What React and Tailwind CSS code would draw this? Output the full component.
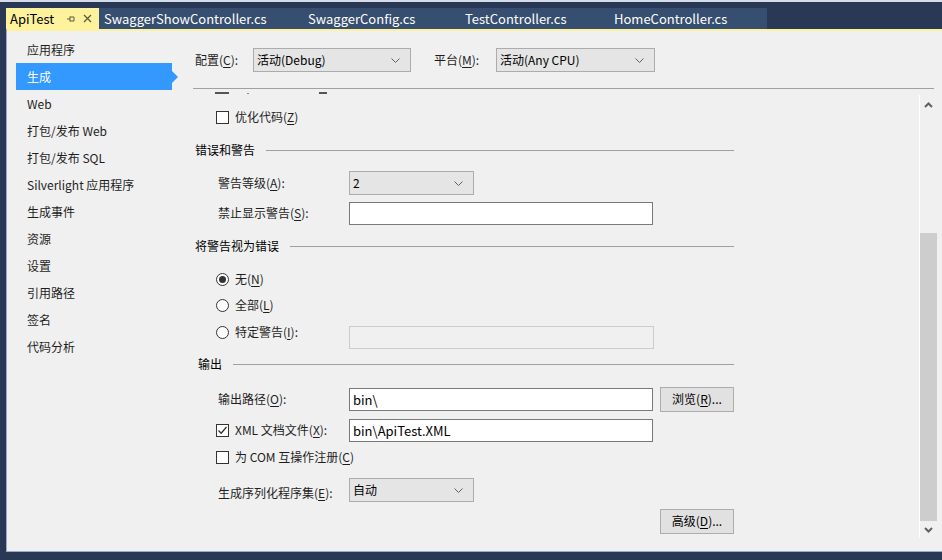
import React from 'react';

const font = { fontFamily: '"Noto Sans CJK SC", "Noto Sans", sans-serif' };

function Chevron() {
  return (
    <svg width="9" height="5" viewBox="0 0 9 5" className="shrink-0">
      <path d="M0.5 0.5 L4.5 4.5 L8.5 0.5" fill="none" stroke="#606060" strokeWidth="1" />
    </svg>
  );
}

function Select({ value, w }) {
  return (
    <div className={`h-[24px] ${w} flex items-center justify-between pl-[3px] pr-[10px] bg-[#e5e5e5] border border-[#acacac] text-black`}>
      <span>{value}</span>
      <Chevron />
    </div>
  );
}

function Box({ checked }) {
  return (
    <div className="w-[13px] h-[13px] border border-[#333] bg-white flex items-center justify-center shrink-0">
      {checked && (
        <svg width="11" height="11" viewBox="0 0 11 11">
          <path d="M1.5 5.5 L4.2 8.2 L9.5 2" fill="none" stroke="#333" strokeWidth="1.3" />
        </svg>
      )}
    </div>
  );
}

function Radio({ on }) {
  return (
    <div className="w-[13px] h-[13px] rounded-full border border-[#333] bg-white flex items-center justify-center shrink-0">
      {on && <div className="w-[7px] h-[7px] rounded-full bg-[#333]" />}
    </div>
  );
}

function Key({ k }) {
  return <span className="underline underline-offset-2">{k}</span>;
}

function Section({ title, h, pl = 'pl-[15px]' }) {
  return (
    <div className={`${h} flex items-center ${pl}`}>
      <span className="text-black">{title}</span>
      <div className="flex-1 h-px bg-[#a0a0a0] ml-[11px] mr-[185px]" />
    </div>
  );
}

const nav = ['应用程序', '生成', 'Web', '打包/发布 Web', '打包/发布 SQL', 'Silverlight 应用程序', '生成事件', '资源', '设置', '引用路径', '签名', '代码分析'];

export default function App() {
  return (
    <div className="w-[942px] h-[560px] bg-[#293955] flex flex-col overflow-hidden text-[12px] leading-none" style={font}>
      <div className="h-[2px] bg-[#d6dbe9]" />
      {/* tab strip */}
      <div className="h-[27px] flex items-end pl-[6px] relative">
        <div className="h-[21px] w-[93px] bg-[#fff29d] flex items-center pl-[4px] text-black">
          <span className="text-[13px]">ApiTest</span>
          <svg width="10" height="10" viewBox="0 0 10 10" className="ml-[12px]">
            <path d="M1 5 H4 M4 2.5 V7.5 M4 3 H8 V7 H4" fill="none" stroke="#5e5a41" strokeWidth="1" />
          </svg>
          <svg width="9" height="9" viewBox="0 0 9 9" className="ml-[7px]">
            <path d="M1 1 L8 8 M8 1 L1 8" fill="none" stroke="#5e5a41" strokeWidth="1.3" />
          </svg>
        </div>
        <div className="h-[21px] flex bg-[#364e6f] text-white text-[13px]">
          <div className="w-[203px] flex items-center pl-[5px]">SwaggerShowController.cs</div>
          <div className="w-[157px] flex items-center pl-[6px]">SwaggerConfig.cs</div>
          <div className="w-[149px] flex items-center pl-[6px]">TestController.cs</div>
          <div className="w-[159px] flex items-center pl-[6px]">HomeController.cs</div>
        </div>
      </div>
      {/* body */}
      <div className="flex-1 flex pl-[6px] pb-[8px]">
        <div className="flex-1 flex flex-col border-l border-b border-[#9aa8c8]">
          <div className="h-[2px] bg-[#fff29d]" />
          <div className="flex-1 bg-[#f0f0f0] flex text-[#1e1e1e]">
            {/* left nav */}
            <div className="w-[173px] pt-[5px] pl-[9px] flex flex-col">
              {nav.map((n) =>
                n === '生成' ? (
                  <div key={n} className="h-[27px] w-[156px] bg-[#3399ff] text-white flex items-center pl-[11px] relative">
                    {n}
                    <div className="absolute right-[-6px] top-[8px] w-0 h-0 border-y-[6px] border-y-transparent border-l-[6px] border-l-[#3399ff]" />
                  </div>
                ) : (
                  <div key={n} className="h-[27px] flex items-center pl-[11px]">{n}</div>
                )
              )}
            </div>
            {/* main */}
            <div className="flex-1 flex flex-col">
              <div className="pt-[17px] pl-[15px] flex items-center h-[41px]">
                <span className="w-[58px]">配置(<Key k="C" />):</span>
                <Select value="活动(Debug)" w="w-[158px]" />
                <span className="ml-[23px] w-[62px]">平台(<Key k="M" />):</span>
                <Select value="活动(Any CPU)" w="w-[159px]" />
              </div>
              <div className="h-[16px]" />
              <div className="h-px bg-[#a0a0a0] ml-[13px] mr-[8px]" />
              <div className="flex-1 flex overflow-hidden">
                <div className="flex-1 overflow-hidden">
                  <div className="mt-[-15px] flex flex-col">
                    {/* row scrolled out of view: only its lower edge shows */}
                    <div className="h-[28px] flex items-end pb-[8px] pl-[35px]">
                      <div className="w-[14px] h-[2px] bg-[#555]" />
                      <div className="ml-[18px] w-[2px] h-[1px] bg-[#888]" />
                      <div className="ml-[70px] w-[8px] h-[2px] bg-[#555]" />
                    </div>
                    <div className="h-[30px] flex items-center pl-[36px]">
                      <Box />
                      <span className="ml-[6px]">优化代码(<Key k="Z" />)</span>
                    </div>
                    <Section title="错误和警告" h="h-[36px]" />
                    <div className="h-[30px] flex items-center pl-[38px]">
                      <span className="w-[131px]">警告等级(<Key k="A" />):</span>
                      <Select value="2" w="w-[125px]" />
                    </div>
                    <div className="h-[30px] flex items-center pl-[38px]">
                      <span className="w-[131px]">禁止显示警告(<Key k="S" />):</span>
                      <div className="w-[304px] h-[23px] bg-white border border-[#7a7a7a]" />
                    </div>
                    <Section title="将警告视为错误" h="h-[36px]" />
                    <div className="h-[30px] flex items-center pl-[36px]">
                      <Radio on />
                      <span className="ml-[6px]">无(<Key k="N" />)</span>
                    </div>
                    <div className="h-[22px] flex items-center pl-[36px]">
                      <Radio />
                      <span className="ml-[6px]">全部(<Key k="L" />)</span>
                    </div>
                    <div className="h-[32px] flex items-center pl-[36px]">
                      <Radio />
                      <span className="ml-[6px] w-[114px]">特定警告(<Key k="I" />):</span>
                      <div className="w-[305px] h-[23px] mt-[10px] bg-[#f0f0f0] border border-[#cccccc]" />
                    </div>
                    <Section title="输出" h="h-[32px]" pl="pl-[18px]" />
                    <div className="h-[38px] flex items-center pl-[38px]">
                      <span className="w-[131px]">输出路径(<Key k="O" />):</span>
                      <div className="w-[304px] h-[23px] bg-white border border-[#7a7a7a] flex items-center pl-[3px] text-black text-[13px]">bin\</div>
                      <div className="ml-[7px] w-[74px] h-[25px] bg-[#e1e1e1] border border-[#adadad] flex items-center justify-center text-black">浏览(<Key k="R" />)...</div>
                    </div>
                    <div className="h-[24px] flex items-center pl-[36px]">
                      <Box checked />
                      <span className="ml-[6px] w-[114px]">XML 文档文件(<Key k="X" />):</span>
                      <div className="w-[304px] h-[23px] bg-white border border-[#7a7a7a] flex items-center pl-[3px] text-black text-[13px]">bin\ApiTest.XML</div>
                    </div>
                    <div className="h-[30px] flex items-center pl-[36px]">
                      <Box />
                      <span className="ml-[6px]">为 COM 互操作注册(<Key k="C" />)</span>
                    </div>
                    <div className="h-[36px] flex items-center pl-[38px]">
                      <span className="w-[131px] mt-[6px]">生成序列化程序集(<Key k="E" />):</span>
                      <Select value="自动" w="w-[125px]" />
                    </div>
                    <div className="h-[26px] flex items-center pl-[480px]">
                      <div className="w-[74px] h-[25px] bg-[#e1e1e1] border border-[#adadad] flex items-center justify-center text-black">高级(<Key k="D" />)...</div>
                    </div>
                  </div>
                </div>
                {/* scrollbar */}
                <div className="w-[18px] h-[443px] mt-[6px] mr-[5px] border-l border-white flex flex-col items-center">
                  <div className="h-[20px] flex items-center justify-center">
                    <svg width="9" height="6" viewBox="0 0 9 6">
                      <path d="M1 5 L4.5 1.5 L8 5" fill="none" stroke="#606060" strokeWidth="2" />
                    </svg>
                  </div>
                  <div className="flex-1 w-full pt-[118px]">
                    <div className="h-[288px] w-full bg-[#cdcdcd]" />
                  </div>
                  <div className="h-[17px] flex items-center justify-center">
                    <svg width="9" height="6" viewBox="0 0 9 6">
                      <path d="M1 1 L4.5 4.5 L8 1" fill="none" stroke="#606060" strokeWidth="2" />
                    </svg>
                  </div>
                </div>
              </div>
            </div>
          </div>
        </div>
      </div>
    </div>
  );
}
